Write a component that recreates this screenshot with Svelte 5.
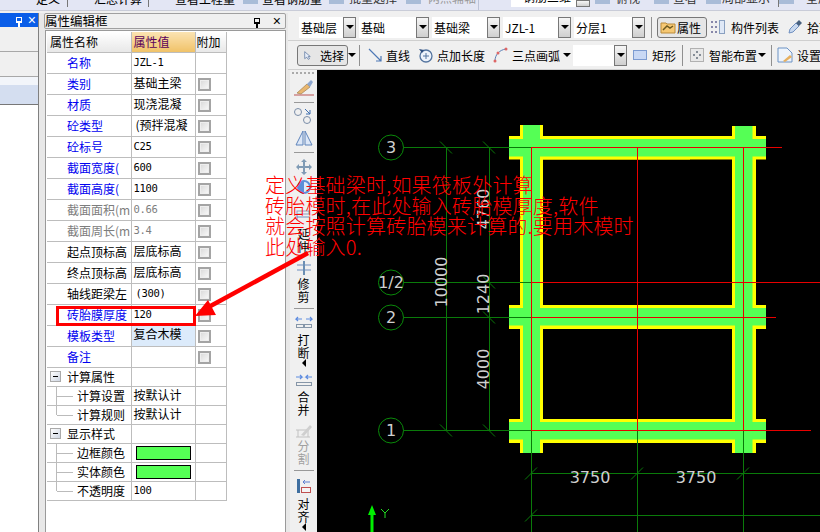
<script>
	const rows = [
		{ name: '名称', value: 'JZL-1', kind: 'blue', latin: true, nocheck: true },
		{ name: '类别', value: '基础主梁', kind: 'blue' },
		{ name: '材质', value: '现浇混凝', kind: 'blue' },
		{ name: '砼类型', value: '(预拌混凝', kind: 'blue', indent: true },
		{ name: '砼标号', value: 'C25', kind: 'blue', latin: true },
		{ name: '截面宽度(', value: '600', kind: 'blue', latin: true },
		{ name: '截面高度(', value: '1100', kind: 'blue', latin: true },
		{ name: '截面面积(m', value: '0.66', kind: 'gray', latin: true },
		{ name: '截面周长(m', value: '3.4', kind: 'gray', latin: true },
		{ name: '起点顶标高', value: '层底标高', kind: 'black' },
		{ name: '终点顶标高', value: '层底标高', kind: 'black' },
		{ name: '轴线距梁左', value: '(300)', kind: 'black', latin: true, indent: true },
		{ name: '砖胎膜厚度', value: '120', kind: 'blue', latin: true },
		{ name: '模板类型', value: '复合木模', kind: 'blue', picked: true },
		{ name: '备注', value: '', kind: 'blue' }
	];

	const groups = [
		{
			name: '计算属性',
			items: [
				{ name: '计算设置', value: '按默认计' },
				{ name: '计算规则', value: '按默认计' }
			]
		},
		{
			name: '显示样式',
			items: [
				{ name: '边框颜色', swatch: true },
				{ name: '实体颜色', swatch: true },
				{ name: '不透明度', value: '100', latin: true }
			]
		}
	];

	// the strip above is cropped, only the feet of its labels show
	const strip = [
		{ w: 36 }, { text: '定义', w: 31 }, { sep: true }, { w: 26 },
		{ text: '汇总计算', w: 54 }, { sep: true }, { w: 26 },
		{ text: '查看工程量', w: 68 }, { w: 19, frag: true },
		{ text: '查看钢筋量', w: 67 }, { w: 20, frag: true },
		{ text: '批量选择', w: 57, tone: 'low' }, { w: 22, frag: true },
		{ text: '两点辅轴', w: 50, tone: 'faint' }
	];
	const stripRight = [
		{ w: 5 }, { w: 21, frag: true }, { text: '俯视', w: 38, tone: 'low' },
		{ w: 19, frag: true }, { text: '查看', w: 33, tone: 'low' },
		{ w: 16, frag: true }, { text: '局部显示', w: 56, tone: 'low' },
		{ sep: true }, { w: 27, frag: true }, { text: '全屏', w: 24, tone: 'low' }
	];

	// axis positions on the drawing, in page pixels
	const xs = [531, 637, 743];
	const columns = [520, 732];
	const beams = [136, 305, 419];
	const axes = [
		{ y: 147, label: '3', end: 782 },
		{ y: 282, label: '1/2', end: 820 },
		{ y: 317, label: '2', end: 776 },
		{ y: 430, label: '1', end: 811 }
	];
	const ticks = [
		[446, 147], [489, 147], [489, 282], [489, 317], [446, 430], [489, 430],
		[531, 473], [637, 473], [743, 473], [531, 515]
	];
</script>

{#snippet caret()}
	<span class="caret"></span>
{/snippet}

{#snippet combo(text, width)}
	<div class="combo" style="width: {width}px">
		<span class="combo-text">{text}</span>
		<span class="combo-btn">{@render caret()}</span>
	</div>
{/snippet}

{#snippet stripItems(list)}
	{#each list as item}
		{#if item.sep}
			<i class="top-sep"></i>
		{:else}
			<span class="cut-text {item.tone ?? ''}" style="width: {item.w}px">
				{#if item.frag}<b class="frag"></b>{:else}{item.text ?? ''}{/if}
			</span>
		{/if}
	{/each}
{/snippet}

<div class="page">
	<div class="topstrip">
		{@render stripItems(strip)}
		<span class="top-gap"><b class="top-split"></b></span>
		<div class="top-white"><span class="top-white-text">钢筋三维</span><span class="combo-btn small"></span></div>
		{@render stripItems(stripRight)}
	</div>

	<div class="body">
		<aside class="stub">
			<div class="blue-title">
				<span class="pin"></span>
				<span class="close">×</span>
			</div>
			<div class="tab"></div>
			<div class="tab"></div>
			<div class="tab selected"></div>
			<div class="stub-white"></div>
		</aside>

		<section class="panel">
			<div class="panel-title">
				<span class="panel-name">属性编辑框</span>
				<span class="pin dark"></span>
				<span class="close dark">×</span>
			</div>
			<div class="sheet">
				<table>
					<colgroup>
						<col class="col-name" />
						<col class="col-value" />
						<col class="col-extra" />
					</colgroup>
					<thead>
						<tr>
							<th class="th-name">属性名称</th>
							<th class="th-value">属性值</th>
							<th class="th-extra">附加</th>
						</tr>
					</thead>
					<tbody>
						{#each rows as row}
							<tr>
								<td class="label {row.kind}"><span class="clip">{row.name}</span></td>
								<td class:picked={row.picked}>
									<span class="clip val" class:latin={row.latin} class:gray={row.kind === 'gray'} class:indent={row.indent} class:top={row.picked}>{row.value}</span>
								</td>
								<td>{#if !row.nocheck}<span class="check"></span>{/if}</td>
							</tr>
						{/each}
						{#each groups as group}
							<tr class="short">
								<td class="label group">
									<span class="minus"></span>
									<span class="clip">{group.name}</span>
								</td>
								<td></td>
								<td></td>
							</tr>
							{#each group.items as item, i}
								<tr class="short">
									<td class="label child">
										<span class="tree" class:last={i === group.items.length - 1}></span>
										<span class="clip">{item.name}</span>
									</td>
									<td>
										{#if item.swatch}
											<span class="swatch"></span>
										{:else}
											<span class="clip val" class:latin={item.latin}>{item.value}</span>
										{/if}
									</td>
									<td></td>
								</tr>
							{/each}
						{/each}
					</tbody>
				</table>
			</div>
		</section>

		<div class="work">
			<div class="bar bar-one">
				{@render combo('基础层', 57)}
				{@render combo('基础', 70)}
				{@render combo('基础梁', 68)}
				{@render combo('JZL-1', 68)}
				{@render combo('分层1', 71)}
				<i class="sep"></i>
				<button class="tool pressed attr">
					<svg width="16" height="14" viewBox="0 0 16 14">
						<path d="M1 3h5l1 1h8v9H1z" fill="#f6c873" stroke="#b98b3c" />
						<path d="M3 10l4-4 3 2 3-2" fill="none" stroke="#6d5a20" stroke-width="1.5" />
					</svg>
					属性
				</button>
				<svg class="ico i-list" width="15" height="14" viewBox="0 0 15 14">
					<path d="M1 1h2v2H1zM1 6h2v2H1zM1 11h2v2H1zM5 1h2v2H5zM5 6h2v2H5zM5 11h2v2H5z" fill="#88a" />
					<rect x="9.500" y="0.500" width="5" height="13" fill="#dfe8f6" stroke="#8aa0c0" />
				</svg>
				<span class="tool-text t-list">构件列表</span>
				<svg class="ico i-pick" width="16" height="16" viewBox="0 0 16 16">
					<path d="M2 14l1-4 6-6 3 3-6 6z" fill="#c9d9ef" stroke="#6f8fc0" />
					<path d="M9 4l3-3 3 3-3 3z" fill="#48617f" />
				</svg>
				<span class="tool-text">拾取</span>
			</div>
			<div class="bar bar-two">
				<button class="tool pressed select">
					<svg width="10" height="13" viewBox="0 0 10 13">
						<path d="M1 1v10l3-2 2 3 2-1-2-3h3z" fill="#e6edf8" stroke="#55709c" />
					</svg>
					<span>选择</span>
				</button>
				<span class="caret-wrap">{@render caret()}</span>
				<i class="sep"></i>
				<svg class="ico i-line" width="15" height="14" viewBox="0 0 15 14">
					<path d="M1 1l12 12M13 8v5H8" fill="none" stroke="#4f79b5" stroke-width="1.200" />
				</svg>
				<span class="tool-text t-line">直线</span>
				<svg class="ico i-point" width="16" height="16" viewBox="0 0 16 16">
					<circle cx="8" cy="9" r="6" fill="#eef3fb" stroke="#54749f" stroke-width="1.300" />
					<path d="M5 9h6M8 6v6" stroke="#54749f" />
					<path d="M1 2l5 1-2 3z" fill="#2f4f7f" />
				</svg>
				<span class="tool-text t-point">点加长度</span>
				<svg class="ico i-arc" width="15" height="16" viewBox="0 0 15 16">
					<path d="M2 14C2 8 6 3 13 2" fill="none" stroke="#5a7fb5" />
					<circle cx="2" cy="14" r="1.500" fill="#d66" />
					<circle cx="5" cy="6" r="1.500" fill="#d66" />
					<circle cx="13" cy="2" r="1.500" fill="#d66" />
				</svg>
				<span class="tool-text t-arc">三点画弧</span>
				<span class="caret-wrap wide">{@render caret()}</span>
				<div class="combo empty">
					<span class="combo-text"></span>
					<span class="combo-btn">{@render caret()}</span>
				</div>
				<svg class="ico i-rect" width="14" height="10" viewBox="0 0 14 10">
					<rect x="0.500" y="0.500" width="13" height="9" fill="#c8d8f4" stroke="#7c9bd0" />
				</svg>
				<span class="tool-text t-rect">矩形</span>
				<i class="sep flush"></i>
				<svg class="ico i-smart" width="14" height="14" viewBox="0 0 14 14">
					<rect x="0.500" y="0.500" width="13" height="13" fill="#e8e8e8" stroke="#777" stroke-dasharray="1 1" />
					<path d="M7 3v2M7 9v2M3 7h2M9 7h2" stroke="#234" />
				</svg>
				<span class="tool-text t-smart">智能布置</span>
				<span class="caret-wrap">{@render caret()}</span>
				<i class="sep roomy"></i>
				<svg class="ico i-set" width="16" height="16" viewBox="0 0 16 16">
					<path d="M1 1h9l5 5v9H1z" fill="#eef4fb" stroke="#6d93c5" />
					<path d="M6 14l7-6 2 2-7 5z" fill="#e6b060" />
				</svg>
				<span class="tool-text">设置</span>
			</div>

			<div class="stage">
				<nav class="side">
					<span class="grip"></span>
					<svg class="side-ico mt5" width="20" height="18" viewBox="0 0 20 18">
						<path d="M3 14L13 5l3 3-9 7z" fill="#e9b76f" stroke="#a08050" stroke-width="0.700" />
						<path d="M13 5l4-4 2 2-3 5z" fill="#8ea7cf" />
						<path d="M0 16h20" stroke="#b55" />
					</svg>
					<i class="side-sep"></i>
					<svg class="side-ico mt4" width="20" height="17" viewBox="0 0 20 17">
						<circle cx="4" cy="5" r="3.500" fill="none" stroke="#7a8da8" />
						<circle cx="13" cy="13" r="3.500" fill="none" stroke="#7a8da8" />
						<path d="M11 2l5 5M16 3v4h-4" fill="none" stroke="#3f6fb0" />
					</svg>
					<svg class="side-ico mt5" width="18" height="18" viewBox="0 0 18 18">
						<path d="M8 2v14H1zM10 2v14h7z" fill="#dce7f7" stroke="#5f84bb" />
					</svg>
					<i class="side-sep"></i>
					<svg class="side-ico mt6" width="16" height="16" viewBox="0 0 16 16">
						<path d="M8 0l3 3H9v4h4V5l3 3-3 3V9H9v4h2l-3 3-3-3h2V9H3v2L0 8l3-3v2h4V3H5z" fill="#7f9bb5" />
					</svg>
					<svg class="side-ico mt4" width="16" height="16" viewBox="0 0 16 16">
						<circle cx="8" cy="8" r="7" fill="#5b8fd8" />
						<path d="M8 3a5 5 0 0 1 0 10z" fill="#dfeaf9" />
					</svg>
					<svg class="side-ico mt15" width="18" height="14" viewBox="0 0 18 14">
						<path d="M2 7h12M2 4v6" stroke="#6f8fc0" />
						<rect x="2" y="1" width="12" height="3" fill="none" stroke="#8aa0c0" />
					</svg>
					<span class="side-text mt3">延<br />伸</span>
					<svg class="side-ico mt7" width="16" height="16" viewBox="0 0 16 16">
						<path d="M1 5h6M1 10h6M9 5h6M9 10h6" stroke="#6f8fc0" />
						<path d="M8 1v14" stroke="#3f6fa0" stroke-width="1.500" />
					</svg>
					<span class="side-text mt1">修<br />剪</span>
					<i class="side-sep"></i>
					<svg class="side-ico mt6" width="18" height="14" viewBox="0 0 18 14">
						<path d="M7 4H1l2-2M1 4l2 2M11 4h6l-2-2M17 4l-2 2" fill="none" stroke="#5c8be0" stroke-width="1.200" />
						<rect x="1.500" y="9.500" width="7" height="3" fill="none" stroke="#8696a8" />
						<rect x="9.500" y="9.500" width="7" height="3" fill="none" stroke="#8696a8" />
					</svg>
					<span class="side-text mt4">打<br />断</span>
					<span class="side-caret"></span>
					<svg class="side-ico mt6" width="18" height="14" viewBox="0 0 18 14">
						<path d="M1 4h6L5 2M7 4L5 6M17 4h-6l2-2M11 4l2 2" fill="none" stroke="#5c8be0" stroke-width="1.200" />
						<rect x="1.500" y="9.500" width="15" height="3" fill="none" stroke="#8696a8" />
					</svg>
					<span class="side-text mt3">合<br />并</span>
					<svg class="side-ico mt7" width="18" height="16" viewBox="0 0 18 16">
						<path d="M1 7h12M1 14h14M3 7v7M13 7v7" stroke="#c2c2c2" fill="none" />
						<path d="M6 12l9-10 2 2-8 9z" fill="#cfcfcf" />
					</svg>
					<span class="side-text gray">分<br />割</span>
					<i class="side-sep"></i>
					<svg class="side-ico mt7" width="16" height="16" viewBox="0 0 16 16">
						<rect x="1" y="1" width="3" height="14" fill="#3f6fa0" />
						<path d="M7 4h7M7 4l2-2M7 4l2 2" fill="none" stroke="#5c7fd0" />
						<rect x="5.500" y="9.500" width="9" height="5" fill="#f5f5f5" stroke="#c05050" />
					</svg>
					<span class="side-text mt3">对<br />齐</span>
					<span class="side-caret"></span>
				</nav>

				<div class="canvas">
					<svg width="503" height="462" viewBox="317 70 503 462">
						<!-- beams: yellow outline under the green fill -->
						{#each beams as y}
							<rect x="509" {y} width="257" height={y === 136 ? 23.500 : 24} fill="#ff0" />
						{/each}
						<rect x="543" y="156" width="147" height="3.500" fill="#ff0" />
						{#each columns as x}
							<rect {x} y="125" width={x === 520 ? 23 : 24} height="328" fill="#ff0" />
						{/each}
						{#each beams as y}
							<rect x="509" y={y + 3} width="257" height="17.500" fill="#55ff55" />
						{/each}
						<rect x="523" y="125" width="17" height="328" fill="#55ff55" />
						<rect x="735" y="126" width="17.500" height="327" fill="#55ff55" />
						<rect x="732" y="125" width="24" height="1" fill="#000" />

						<!-- grid lines -->
						<g stroke="#0a7a0a" fill="none">
							<path d="M446.500 147V430M489.500 147V430" />
							{#each axes as a}
								<path d="M403 {a.y + 0.500}H531" />
							{/each}
							<path d="M531.500 430V532M637.500 430V532M743.500 430V532" />
							<path d="M531 473.500H820M531 515.500H820" />
							{#each ticks as [x, y]}
								<path d="M{x - 6} {y + 6.500}L{x + 6} {y - 5.500}" opacity={y > 450 ? 1 : 0} />
								<path d="M{x - 6} {y - 5.500}L{x + 6} {y + 6.500}" opacity={y > 450 ? 0 : 1} />
							{/each}
						</g>
						<g stroke="#e80000" fill="none">
							{#each axes as a}
								<path d="M531 {a.y + 0.500}H{a.end}" />
							{/each}
							{#each xs as x}
								<path d="M{x + 0.500} 147V430" />
							{/each}
						</g>

						<!-- axis bubbles -->
						{#each axes as a}
							<circle cx="391" cy={a.y + 0.500} r="12.500" fill="#000" stroke="#0a8a0a" />
							<text class="dim-text" x="391" y={a.y + 6} text-anchor="middle">{a.label}</text>
						{/each}

						<text class="dim-text" transform="translate(447 282) rotate(-90)" text-anchor="middle">10000</text>
						<text class="dim-text" transform="translate(489 209) rotate(-90)" text-anchor="middle">4760</text>
						<text class="dim-text" transform="translate(489 294) rotate(-90)" text-anchor="middle">1240</text>
						<text class="dim-text" transform="translate(489 369) rotate(-90)" text-anchor="middle">4000</text>
						<text class="dim-text" x="590" y="483" text-anchor="middle">3750</text>
						<text class="dim-text" x="696" y="483" text-anchor="middle">3750</text>

						<!-- Y axis marker -->
						<path d="M372 505l4 10h-2.500v17h-3V515H368z" fill="#00f000" />
						<path d="M381 509l4 4 4-4M385 513v5" stroke="#22dd22" fill="none" />
					</svg>
				</div>
			</div>
		</div>
	</div>

	<!-- hand-drawn note over the screenshot -->
	<div class="note">定义基础梁时,如果筏板外计算<br />砖胎模时,在此处输入砖胎模厚度,软件<br />就会按照计算砖胎模来计算的.要用木模时<br />此处输入0.</div>
	<div class="mark"></div>
	<svg class="arrow" width="130" height="80" viewBox="190 245 130 80">
		<path d="M308 253L205 309" stroke="#f00" stroke-width="4.500" fill="none" />
		<path d="M195 316L208 300L216 315z" fill="#f00" />
	</svg>
</div>

<style>
	:global(body) {
		margin: 0;
		background: #e9e9e9;
	}
	.page {
		position: relative;
		width: 820px;
		height: 532px;
		overflow: hidden;
		font-family: "Noto Sans CJK SC", "Liberation Sans", sans-serif;
		font-size: 12px;
		color: #000;
	}

	/* top strip, mostly cut off by the crop */
	.topstrip {
		display: flex;
		height: 13px;
		background: linear-gradient(#e3e6f4 0 10px, #c9ccd8 10px 11px, #f0f0f0 11px);
		overflow: hidden;
	}
	.cut-text {
		flex: none;
		display: block;
		height: 13px;
		font-size: 12px;
		line-height: 13px;
		margin-top: -8px;
		white-space: nowrap;
	}
	.cut-text.low {
		margin-top: -9px;
		color: #333;
	}
	.cut-text.faint {
		margin-top: -9px;
		color: #999;
	}
	.frag {
		display: block;
		width: 15px;
		height: 4px;
		margin-top: 8px;
		background: #a9bcd8;
	}
	.top-sep {
		flex: none;
		width: 1px;
		height: 7px;
		background: #777;
	}
	.top-gap {
		flex: none;
		width: 33px;
	}
	.top-split {
		display: block;
		width: 1px;
		height: 10px;
		background: #bcc3d8;
	}
	.top-white {
		flex: none;
		display: flex;
		justify-content: space-between;
		box-sizing: border-box;
		width: 79px;
		height: 7px;
		padding-left: 12px;
		background: #fff;
		line-height: 13px;
		overflow: hidden;
	}
	.top-white-text {
		margin-top: -10px;
	}
	.combo-btn.small {
		height: 7px;
		width: 14px;
	}

	.body {
		display: flex;
		height: 519px;
	}

	/* cut-off panel on the left */
	.stub {
		flex: none;
		display: flex;
		flex-direction: column;
		width: 38px;
		border-right: 1px solid #808080;
		background: #f0f0f0;
	}
	.blue-title {
		display: flex;
		align-items: center;
		justify-content: flex-end;
		gap: 6px;
		height: 14px;
		padding-right: 2px;
		background: #0a5ee8;
		color: #fff;
	}
	.tab {
		height: 24px;
		border-bottom: 1px solid #a8a8a8;
		background: #f0f0f0;
	}
	.tab.selected {
		height: 27px;
		background: linear-gradient(#f2f5fa 0 30%, #d4def0 30%);
		border-bottom: 1px solid #777;
	}
	.stub-white {
		flex: 1;
		background: #fff;
	}
	.pin {
		position: relative;
		width: 6px;
		height: 6px;
		border: 1px solid #fff;
		border-bottom-width: 2px;
		box-sizing: border-box;
	}
	.pin::after {
		content: "";
		position: absolute;
		left: 1px;
		top: 5px;
		width: 2px;
		height: 4px;
		background: #fff;
	}
	.pin.dark {
		border-color: #000;
	}
	.pin.dark::after {
		background: #000;
	}
	.close {
		font: 14px/12px "Liberation Sans", sans-serif;
	}

	/* property editor */
	.panel {
		flex: none;
		display: flex;
		flex-direction: column;
		width: 250px;
		box-sizing: border-box;
		padding: 0 3px 0 6px;
		background: #e8e8e8;
	}
	.panel-title {
		display: flex;
		align-items: center;
		flex: none;
		height: 14px;
		padding: 0 4px 0 0;
		gap: 13px;
		border: 1px solid #a0a0a0;
		border-radius: 2px;
		background: #f0f0f0;
		margin-left: -1px;
	}
	.panel-name {
		flex: 1;
		font-size: 12.500px;
		line-height: 14px;
	}
	.sheet {
		flex: 1;
		margin-top: 1px;
		padding: 1px 0 0 1px;
		border: 1px solid #9a9a9a;
		border-bottom: 0;
		background: #fff;
	}
	table {
		border-collapse: collapse;
		table-layout: fixed;
		width: 179px;
		font-size: 12px;
	}
	.col-name {
		width: 84px;
	}
	.col-value {
		width: 64px;
	}
	.col-extra {
		width: 31px;
	}
	th,
	td {
		padding: 0;
		height: 20px;
		border: 1px solid #bdbdbd;
		font-weight: normal;
		text-align: left;
		overflow: hidden;
		white-space: nowrap;
		line-height: 16px;
		position: relative;
	}
	tr.short td {
		height: 18px;
	}
	thead th {
		border-top: 0;
		border-left: 0;
		height: 20px;
		background: linear-gradient(#fff, #e8e8e8);
	}
	td:first-child {
		border-left: 0;
	}
	th.th-name {
		padding-left: 3px;
	}
	th.th-value {
		padding-left: 2px;
		color: #5a005a;
		background: linear-gradient(#fbe3b2, #f0c268);
	}
	th.th-extra {
		padding-left: 1px;
	}
	.clip {
		display: block;
		overflow: hidden;
	}
	.label .clip {
		padding-left: 20px;
		margin-top: -1px;
	}
	.label.blue {
		color: #0000f0;
	}
	.label.gray {
		color: #7d7d7d;
	}
	.val {
		padding-left: 2px;
		margin-top: -2px;
	}
	.val.latin {
		font-family: "DejaVu Sans Mono", monospace;
		font-size: 10.500px;
		letter-spacing: -0.300px;
	}
	.val.gray {
		color: #7d7d7d;
	}
	.val.indent {
		padding-left: 4px;
	}
	td.picked {
		background: #dcebfb;
		vertical-align: top;
	}
	.val.top {
		margin-top: 0;
	}
	.check {
		display: block;
		width: 9px;
		height: 9px;
		margin-left: 2px;
		border: 2px solid #a4a4a4;
		background: linear-gradient(135deg, #d8d8d8, #fafafa);
		box-shadow: inset 0 0 0 1px #eee;
	}
	.label.group .clip {
		padding-left: 20px;
	}
	.label.child .clip {
		padding-left: 30px;
	}
	.minus {
		position: absolute;
		left: 3px;
		top: 3px;
		width: 9px;
		height: 9px;
		border: 1px solid #aaa;
		background: linear-gradient(135deg, #fff, #cfd6e2);
	}
	.minus::after {
		content: "";
		position: absolute;
		left: 2px;
		top: 4px;
		width: 5px;
		height: 1px;
		background: #000;
	}
	.tree {
		position: absolute;
		left: 9px;
		top: 0;
		bottom: 0;
		width: 16px;
		border-left: 1px solid #bbb;
	}
	.tree::after {
		content: "";
		position: absolute;
		left: 0;
		top: 9px;
		width: 16px;
		height: 1px;
		background: #bbb;
	}
	.tree.last {
		bottom: 9px;
	}
	.swatch {
		display: block;
		width: 53px;
		height: 12px;
		margin-left: 4px;
		border: 1px solid #000;
		background: #55ff55;
	}

	/* work area */
	.work {
		flex: none;
		display: flex;
		flex-direction: column;
		width: 532px;
		margin-left: -1px;
	}
	.bar {
		flex: none;
		display: flex;
		align-items: center;
		box-sizing: border-box;
		background: #f0f0f0;
		border-bottom: 1px solid #cfcfcf;
		overflow: hidden;
		white-space: nowrap;
	}
	.bar-one {
		height: 28px;
		padding-left: 11px;
		padding-top: 1px;
	}
	.bar-two {
		height: 29px;
		padding-left: 9px;
	}
	.combo {
		flex: none;
		display: flex;
		align-items: center;
		height: 21px;
		margin-right: 3px;
		background: #fff;
	}
	.combo-text {
		flex: 1;
		padding-left: 2px;
		overflow: hidden;
	}
	.combo-btn {
		flex: none;
		display: flex;
		align-items: center;
		justify-content: center;
		box-sizing: border-box;
		width: 13px;
		height: 21px;
		border: 1px solid #777;
		background: linear-gradient(#f6f6f6, #cfcfcf);
	}
	.caret {
		display: block;
		width: 0;
		height: 0;
		border: 4px solid transparent;
		border-top: 4px solid #000;
		border-bottom: 0;
	}
	.caret-wrap {
		flex: none;
		display: flex;
		width: 8px;
		justify-content: center;
	}
	.caret-wrap.wide {
		width: 13px;
	}
	.sep {
		flex: none;
		width: 1px;
		height: 21px;
		margin: 0 5px 0 3px;
		background: #909090;
	}
	.sep.flush {
		margin-left: 0;
	}
	.sep.roomy {
		margin-left: 5px;
	}
	.tool {
		flex: none;
		display: flex;
		align-items: center;
		gap: 5px;
		height: 21px;
		padding: 0 3px 0 4px;
		font: inherit;
		color: inherit;
	}
	.tool.pressed {
		box-sizing: border-box;
		border: 1px solid #777;
		border-radius: 3px;
		background: #e6e6e6;
	}
	.tool.attr {
		width: 50px;
		gap: 1px;
		padding: 0 2px;
	}
	.tool.select {
		width: 51px;
		padding-left: 6px;
		gap: 9px;
	}
	.ico {
		flex: none;
	}
	.i-list {
		margin: 0 6px 0 3px;
	}
	.i-pick {
		margin: 0 4px 0 8px;
	}
	.i-line {
		margin: 0 3px 0 3px;
	}
	.i-point {
		margin-right: 3px;
	}
	.i-arc {
		margin-right: 4px;
	}
	.i-rect {
		margin: 0 5px 0 6px;
	}
	.i-smart {
		margin: 0 5px 0 2px;
	}
	.i-set {
		margin-right: 4px;
	}
	.tool-text {
		flex: none;
	}
	.t-list {
		width: 48px;
	}
	.t-line {
		width: 32px;
	}
	.t-point {
		width: 56px;
	}
	.t-arc {
		width: 48px;
		overflow: hidden;
	}
	.t-rect {
		width: 30px;
	}
	.t-smart {
		width: 49px;
	}
	.combo.empty {
		width: 54px;
		margin-right: 0;
	}

	.stage {
		flex: 1;
		display: flex;
		min-height: 0;
	}
	.side {
		flex: none;
		display: flex;
		flex-direction: column;
		align-items: center;
		width: 27px;
		margin-left: 2px;
		background: #f0f0f0;
		color: #000;
		overflow: hidden;
	}
	.grip {
		flex: none;
		width: 24px;
		height: 2px;
		margin-top: 2px;
		background: repeating-linear-gradient(90deg, #aaa 0 2px, transparent 2px 4px);
	}
	.side-ico {
		flex: none;
	}
	.mt1 {
		margin-top: 1px;
	}
	.mt3 {
		margin-top: 3px;
	}
	.mt4 {
		margin-top: 4px;
	}
	.mt5 {
		margin-top: 5px;
	}
	.mt6 {
		margin-top: 6px;
	}
	.mt7 {
		margin-top: 7px;
	}
	.mt15 {
		margin-top: 15px;
	}
	.side-sep {
		flex: none;
		width: 20px;
		height: 1px;
		margin-top: 5px;
		background: #999;
	}
	.side-text {
		flex: none;
		font-size: 12px;
		line-height: 13px;
		text-align: center;
	}
	.side-text.gray {
		color: #a0a0a0;
	}
	.side-caret {
		flex: none;
		width: 0;
		height: 0;
		border: 4px solid transparent;
		border-right: 4px solid #000;
		border-left: 0;
	}
	.canvas {
		flex: 1;
		background: #000;
		overflow: hidden;
	}
	.canvas svg {
		display: block;
	}
	.dim-text {
		font-family: "DejaVu Sans", sans-serif;
		font-size: 16px;
		fill: #cfcfcf;
	}

	/* annotation laid over the screenshot */
	.note {
		position: absolute;
		left: 265px;
		top: 175px;
		font-size: 20px;
		font-weight: 300;
		letter-spacing: 0.200px;
		line-height: 20.500px;
		color: #f00;
		white-space: nowrap;
	}
	.mark {
		position: absolute;
		left: 56px;
		top: 306px;
		width: 134px;
		height: 14px;
		border: 3px solid #f00;
	}
	.arrow {
		position: absolute;
		left: 190px;
		top: 245px;
	}
</style>
